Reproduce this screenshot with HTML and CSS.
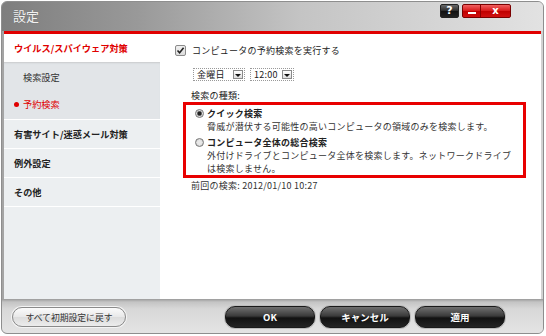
FILE: index.html
```html
<!DOCTYPE html>
<html lang="ja">
<head>
  <meta charset="UTF-8">
  <link rel="stylesheet" href="styles.css">
  <title>設定</title>
</head>
<body>
  <div class="window">
    <div class="titlebar">
      <span class="title">設定</span>
      <div class="title-buttons">
        <span class="btn-help">?</span>
        <span class="btn-red">
          <span class="btn-min"><i></i></span>
          <span class="btn-close">x</span>
        </span>
      </div>
    </div>
    <div class="redline"></div>

    <div class="main">
      <div class="sidebar">
        <div class="nav-item active">ウイルス/スパイウェア対策</div>
        <div class="nav-sub">
          <div class="sub-item">検索設定</div>
          <div class="sub-item current"><span class="dot"></span>予約検索</div>
        </div>
        <div class="nav-item">有害サイト/迷惑メール対策</div>
        <div class="nav-item">例外設定</div>
        <div class="nav-item">その他</div>
      </div>

      <div class="content">
        <div class="check-row">
          <span class="checkbox">
            <svg width="9" height="9" viewBox="0 0 9 9"><path d="M1.5 4.5 L3.6 6.8 L7.6 1.8" fill="none" stroke="#222" stroke-width="1.6"/></svg>
          </span>
          <span>コンピュータの予約検索を実行する</span>
        </div>
        <div class="select-row">
          <span class="select day"><span class="val">金曜日</span><span class="arrow"></span></span>
          <span class="select time"><span class="val">12:00</span><span class="arrow"></span></span>
        </div>
        <div class="label">検索の種類:</div>
        <div class="redbox">
          <div class="opt">
            <span class="radio on"></span>
            <div>
              <div class="opt-title">クイック検索</div>
              <div class="opt-desc">脅威が潜伏する可能性の高いコンピュータの領域のみを検索します。</div>
            </div>
          </div>
          <div class="opt second">
            <span class="radio"></span>
            <div>
              <div class="opt-title">コンピュータ全体の総合検索</div>
              <div class="opt-desc">外付けドライブとコンピュータ全体を検索します。ネットワークドライブ<br>は検索しません。</div>
            </div>
          </div>
        </div>
        <div class="last">前回の検索: 2012/01/10 10:27</div>
      </div>
    </div>

    <div class="bottombar">
      <button class="btn-reset">すべて初期設定に戻す</button>
      <div class="btn-group">
        <button class="btn-dark">OK</button>
        <button class="btn-dark">キャンセル</button>
        <button class="btn-dark">適用</button>
      </div>
    </div>
  </div>
</body>
</html>
```

FILE: styles.css
```css
body {
  margin: 0;
  background: #fff;
  font-family: "Noto Sans CJK JP", "Noto Sans", sans-serif;
  color: #222;
}

.window {
  width: 543px;
  height: 333px;
  margin: 1px 0 0 1px;
  box-sizing: border-box;
  border: 1px solid #8e8e8e;
  border-radius: 6px;
  overflow: hidden;
  display: flex;
  flex-direction: column;
  background: linear-gradient(to right, #a4a4a4, #d2d2d2);
}

/* barra de titulo */
.titlebar {
  height: 29px;
  flex: none;
  display: flex;
  align-items: flex-start;
  background: linear-gradient(to right, #7e7e7e 0%, #999 25%, #c4c4c4 55%, #e2e2e2 100%);
}

.title {
  margin: 6px 0 0 11px;
  font-size: 13px;
  line-height: 16px;
  color: #f2f2f2;
  text-shadow: 0 0 1px #666;
}

.title-buttons {
  margin: 2px 32px 0 auto;
  display: flex;
  gap: 3px;
}

.btn-help {
  width: 19px;
  height: 14px;
  box-sizing: border-box;
  border: 1px solid #222;
  border-radius: 2px;
  background: linear-gradient(#6a6a6a, #2a2a2a 50%, #111 51%, #222);
  color: #fff;
  font: bold 11px/12px "DejaVu Sans", sans-serif;
  text-align: center;
}

.btn-red {
  display: flex;
  height: 14px;
  box-sizing: border-box;
  border: 1px solid #7a0000;
  border-radius: 2px;
  overflow: hidden;
  background: linear-gradient(#f06060, #d81818 50%, #c00000 51%, #d01010);
}

.btn-min {
  width: 17px;
  border-right: 1px solid #8a0000;
  display: flex;
  align-items: flex-end;
  justify-content: center;
}

.btn-min i {
  width: 8px;
  height: 2px;
  margin-bottom: 3px;
  background: #fff;
}

.btn-close {
  width: 29px;
  color: #fff;
  font: bold 10px/11px "DejaVu Sans", sans-serif;
  text-align: center;
}

.redline {
  height: 3px;
  flex: none;
  margin: 0 2px;
  background: #e00000;
}

.main {
  height: 265px;
  flex: none;
  margin: 0 2px;
  display: flex;
}

/* menu lateral */
.sidebar {
  width: 156px;
  background: #eceff1;
  font-size: 9.2px;
}

.nav-item {
  height: 29px;
  box-sizing: border-box;
  border-bottom: 1px solid #fff;
  padding-left: 10px;
  line-height: 28px;
  font-weight: bold;
  color: #222;
}

.nav-item.active {
  height: 28px;
  border-bottom: none;
  background: #fff;
  color: #e00000;
}

.nav-sub {
  padding: 2px 0 1px;
  background: #e2e5e8;
  box-shadow: inset 0 2px 2px -1px #c8cacc;
  border-bottom: 1px solid #fff;
}

.sub-item {
  height: 27px;
  line-height: 27px;
  padding-left: 19px;
  display: flex;
  align-items: center;
  color: #333;
}

.sub-item.current {
  padding-left: 10px;
  color: #e00000;
}

.dot {
  width: 5px;
  height: 5px;
  margin-right: 4px;
  border-radius: 50%;
  background: #e00000;
}

/* conteudo */
.content {
  flex: 1;
  background: #fff;
  font-size: 9px;
  line-height: 13px;
  letter-spacing: 0.25px;
  color: #222;
}

.check-row {
  margin: 10px 0 0 15px;
  height: 13px;
  display: flex;
  align-items: center;
  gap: 6px;
}

.checkbox {
  width: 11px;
  height: 11px;
  box-sizing: border-box;
  border: 1px solid #8a8a8a;
  border-radius: 2px;
  background: linear-gradient(#f0f0f0, #dcdcdc);
  display: flex;
  align-items: center;
  justify-content: center;
}

.select-row {
  margin: 11px 0 0 33px;
  display: flex;
  gap: 5px;
}

.select {
  height: 13px;
  box-sizing: border-box;
  border: 1px dotted #999;
  display: flex;
  align-items: center;
  justify-content: space-between;
  padding: 0 1px 0 3px;
  line-height: 11px;
}

.select.day { width: 52px; }
.select.time { width: 44px; }

.select .arrow {
  width: 10px;
  height: 9px;
  box-sizing: border-box;
  border: 1px solid #8a8a8a;
  background: linear-gradient(#fff, #dedede);
  position: relative;
}

.select .arrow::after {
  content: "";
  position: absolute;
  left: 1px;
  top: 3px;
  border: 3px solid transparent;
  border-top: 3px solid #111;
  border-bottom: none;
}

.label {
  margin: 8px 0 0 31px;
}

.redbox {
  margin: 0 15px 0 23px;
  height: 76px;
  box-sizing: border-box;
  border: 3px solid #e80000;
  padding: 2px 0 0 9px;
}

.opt {
  display: flex;
  gap: 3px;
}

.opt.second {
  margin-top: 3px;
}

.radio {
  width: 9px;
  height: 9px;
  margin-top: 2px;
  flex: none;
  box-sizing: border-box;
  border: 1px solid #777;
  border-radius: 50%;
  background: radial-gradient(circle, #e8e8e8 40%, #bdbdbd 100%);
}

.radio.on {
  background: radial-gradient(circle, #222 30%, #777 45%, #ddd 60%);
}

.opt-title {
  font-weight: bold;
}

.opt-desc {
  color: #333;
}

.last {
  margin: 1px 0 0 31px;
  color: #333;
}

/* barra inferior */
.bottombar {
  height: 34px;
  flex: none;
  box-sizing: border-box;
  padding: 7px 38px 0 10px;
  display: flex;
  align-items: flex-start;
  background: linear-gradient(#9a9a9a, #c4c4c4 3px, #d8d8d8 10px, #e4e4e4);
}

.btn-reset {
  width: 114px;
  height: 20px;
  border: 1px solid #8a8a8a;
  border-radius: 10px;
  background: linear-gradient(#fbfbfb, #e8e8e8 50%, #dcdcdc 51%, #ececec);
  box-shadow: 0 0 0 1px #f4f4f4;
  font-family: "Noto Sans CJK JP", sans-serif;
  font-size: 8.8px;
  color: #333;
  padding: 0;
  margin-top: 1px;
}

.btn-group {
  margin-left: auto;
  display: flex;
  gap: 5px;
}

.btn-dark {
  width: 90px;
  height: 22px;
  border: 1px solid #1a1a1a;
  border-radius: 10px;
  background: linear-gradient(#707070, #3a3a3a 45%, #111 55%, #242424);
  box-shadow: 0 0 0 1px #bdbdbd;
  color: #fff;
  font-family: "Noto Sans CJK JP", sans-serif;
  font-size: 9.5px;
  font-weight: bold;
  padding: 0;
}
```
